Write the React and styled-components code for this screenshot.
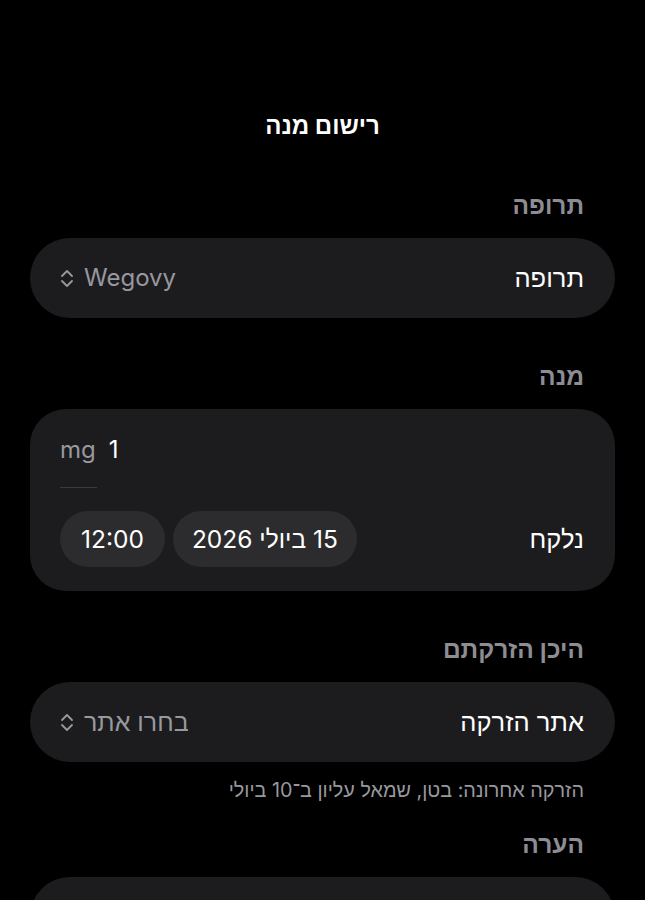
import styled, { createGlobalStyle } from 'styled-components';

const GlobalStyle = createGlobalStyle`
  body {
    margin: 0;
    background: #000;
    font-family: Inter, "Liberation Sans", "DejaVu Sans", sans-serif;
    -webkit-font-smoothing: antialiased;
  }
`;

const Page = styled.div`
  direction: rtl;
  background: #000;
  min-height: 900px;
  padding: 111px 30px 40px;
  box-sizing: border-box;
  color: #fff;
`;

const Title = styled.h1`
  margin: 0 0 49px;
  text-align: center;
  font-size: 24px;
  line-height: 30px;
  font-weight: 700;
  color: #fff;
`;

const Section = styled.section`
  display: flex;
  flex-direction: column;
  margin-bottom: ${(p) => p.$after || 43}px;
`;

const Header = styled.h2`
  margin: 0 0 18px;
  padding: 0 31px 0 0;
  font-size: 24.5px;
  line-height: 30px;
  font-weight: 700;
  color: #8d8d93;
`;

const Card = styled.div`
  background: #1c1c1e;
  border-radius: ${(p) => (p.$tall ? 36 : 40)}px;
  padding: ${(p) => (p.$tall ? '26px 31px 23px 30px' : '0 31px 0 30px')};
  min-height: ${(p) => p.$minH || 80}px;
  box-sizing: border-box;
  display: flex;
  flex-direction: column;
  justify-content: ${(p) => (p.$tall ? 'flex-start' : 'center')};
`;

const Row = styled.div`
  display: flex;
  align-items: center;
  justify-content: space-between;
`;

const Label = styled.span`
  font-size: 25.5px;
  line-height: 30px;
  color: #fff;
`;

const Picker = styled.span`
  display: flex;
  align-items: center;
  gap: 10px;
  font-size: ${(p) => (p.$latin ? 24 : 25)}px;
  line-height: 30px;
  color: #98989f;
`;

const AmountRow = styled.div`
  display: flex;
  justify-content: flex-end;
  align-items: center;
  gap: 13px;
  font-size: 24px;
  line-height: 30px;
`;

const Amount = styled.span`
  color: ${(p) => (p.$unit ? '#98989f' : '#fff')};
`;

const Underline = styled.div`
  align-self: flex-end;
  width: 37px;
  height: 1px;
  background: #3a3a3c;
  margin: 22px 0 23px;
`;

const Pills = styled.div`
  display: flex;
  gap: 8px;
`;

const Pill = styled.span`
  height: 56px;
  padding: 0 ${(p) => p.$pad || 19}px;
  border-radius: 28px;
  background: #2c2c2e;
  display: flex;
  align-items: center;
  font-size: 24.5px;
  color: #fff;
`;

const Note = styled.p`
  margin: 17px 31px 0 0;
  font-size: 19.8px;
  line-height: 22px;
  color: #98989f;
`;

function UpDown() {
  return (
    <svg width="14" height="19" viewBox="0 0 14 19" fill="none" stroke="#98989f" strokeWidth="1.8" strokeLinecap="round" strokeLinejoin="round">
      <path d="M2 7 L7 2 L12 7" />
      <path d="M2 12 L7 17 L12 12" />
    </svg>
  );
}

export default function App() {
  return (
    <>
      <GlobalStyle />
      <Page>
        <Title>רישום מנה</Title>

        <Section>
          <Header>תרופה</Header>
          <Card>
            <Row>
              <Label>תרופה</Label>
              <Picker dir="ltr" $latin>
                <UpDown />
                Wegovy
              </Picker>
            </Row>
          </Card>
        </Section>

        <Section>
          <Header>מנה</Header>
          <Card $tall $minH={182}>
            <AmountRow>
              <Amount>1</Amount>
              <Amount $unit>mg</Amount>
            </AmountRow>
            <Underline />
            <Row>
              <Label>נלקח</Label>
              <Pills>
                <Pill>15 ביולי 2026</Pill>
                <Pill $pad={21}>12:00</Pill>
              </Pills>
            </Row>
          </Card>
        </Section>

        <Section $after={28}>
          <Header>היכן הזרקתם</Header>
          <Card>
            <Row>
              <Label>אתר הזרקה</Label>
              <Picker>
                בחרו אתר
                <UpDown />
              </Picker>
            </Row>
          </Card>
          <Note>הזרקה אחרונה: בטן, שמאל עליון ב־10 ביולי</Note>
        </Section>

        <Section>
          <Header>הערה</Header>
          <Card $minH={120} />
        </Section>
      </Page>
    </>
  );
}
